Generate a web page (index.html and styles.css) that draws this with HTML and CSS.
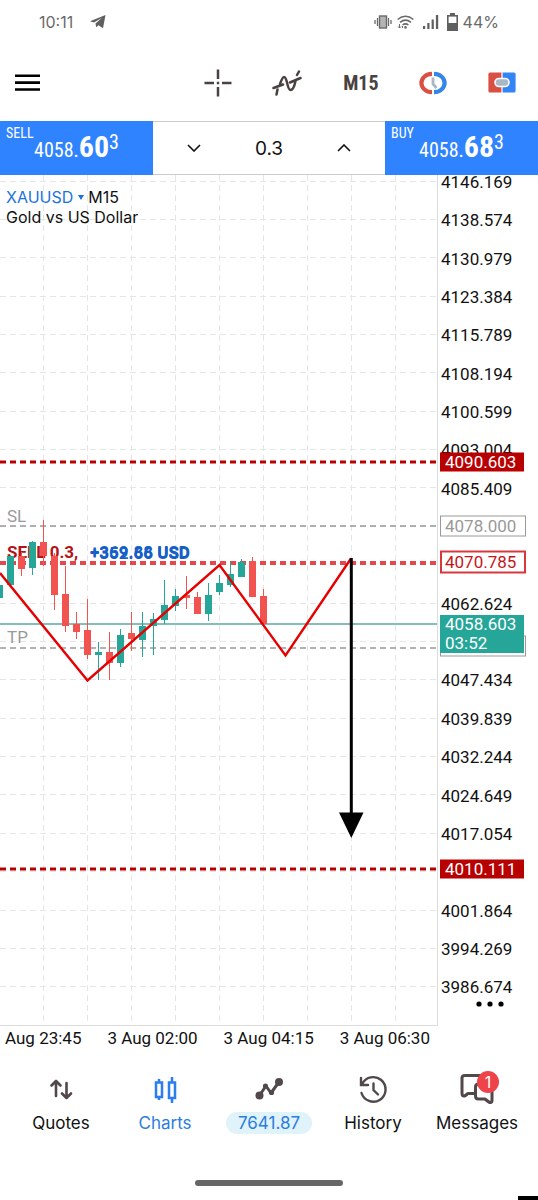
FILE: index.html
```
<!DOCTYPE html>
<html lang="en">
<head>
  <meta charset="UTF-8" />
  <meta name="viewport" content="width=device-width, initial-scale=1" />
  <title>XAUUSD M15</title>
  <link rel="stylesheet" href="styles.css">
</head>
<body>

  <!-- Status bar -->
  <header class="status">
    <span class="clock">10:11</span>
    <svg class="telegram" width="16" height="14" viewBox="0 0 16 14"><path d="M0 6.300 15.500 0 13 13.300 8.500 10.200 6.200 12.200 5.500 8.500 12 2.800 4 7.500Z" fill="#5f5f5f"/></svg>
    <span class="spacer"></span>
    <svg width="18" height="14" viewBox="0 0 18 14" fill="none" stroke="#6a6a6a">
      <rect x="5.500" y="1" width="7" height="12" fill="#b5b5b5" stroke-width="1.400"/>
      <path d="M3.500 3v8M1 5v4M14.500 3v8M17 5v4" stroke-width="1.300"/>
    </svg>
    <svg width="17" height="14" viewBox="0 0 17 14" fill="none" stroke="#6a6a6a" stroke-width="1.600">
      <path d="M.6 4.500Q8.500-2 16.400 4.500M3 7.300q5.500-4.300 11 0M5.600 10q3-2.400 5.800 0"/>
      <circle cx="8.500" cy="12.400" r="1.300" fill="#6a6a6a" stroke="none"/>
      <path d="M2.500 9v4M1 11.500 2.500 13 4 11.500M5.500 13v-2" stroke-width="1"/>
    </svg>
    <svg class="signal" width="16" height="14" viewBox="0 0 16 14" fill="#5f5f5f">
      <rect x="0" y="11" width="2.200" height="3"/><rect x="4.300" y="8" width="2.200" height="6"/>
      <rect x="8.600" y="4.500" width="2.200" height="9.500"/><rect x="12.900" y="0" width="2.300" height="14"/>
    </svg>
    <svg class="battery" width="11" height="18" viewBox="0 0 11 18">
      <path d="M3 0h5v2h3v16H0V2h3Z" fill="#5f5f5f"/><rect x="1.600" y="3.600" width="7.800" height="6.400" fill="#fff"/>
    </svg>
    <span>44%</span>
  </header>

  <!-- Toolbar -->
  <nav class="toolbar">
    <button class="tool menu" aria-label="Menu">
      <svg width="25" height="18" viewBox="0 0 25 18" stroke="#000" stroke-width="2.600"><path d="M0 1.800h25M0 8.600h25M0 15.500h25"/></svg>
    </button>
    <button class="tool" aria-label="Crosshair">
      <svg width="28" height="28" viewBox="0 0 28 28" stroke="#4a4240" stroke-width="2.500"><path d="M14 .5v9.500M14 18v9.500M.5 14h9.500M18 14h9.500M12.800 14h2.400"/></svg>
    </button>
    <button class="tool" aria-label="Indicators">
      <svg width="30" height="26" viewBox="0 0 30 26" fill="none" stroke="#4a4240" stroke-width="2.500" stroke-linecap="round">
        <path d="M1.500 18 11 14.500M18 12.500 28.500 8M4.500 24.500 5.500 19.500M8 14Q10.500 7 12 7C15.500 7 15 20 18.500 20 21 20 22.500 16 23.500 11M25 5 27 1.500"/>
      </svg>
    </button>
    <button class="tool period">M15</button>
    <button class="tool" aria-label="Trade clock">
      <svg width="28" height="24" viewBox="0 0 28 24" fill="none">
        <path d="M13 2.800A10.600 9.200 0 0 0 13 21.200" stroke="#da4f43" stroke-width="4.200"/>
        <path d="M15 2.800A10.600 9.200 0 0 1 15 21.200" stroke="#3385e8" stroke-width="4.200"/>
        <path d="M14 6.500v6.500l3.500 4" stroke="#a9b8c4" stroke-width="2.800"/>
      </svg>
    </button>
    <button class="tool" aria-label="One click trading">
      <svg width="28" height="21" viewBox="0 0 28 21">
        <path d="M2 .5h11.400v20H2Q.4 20.500.4 19V2Q.4.500 2 .5" fill="#da4f43"/>
        <path d="M14.600.5H26q1.600 0 1.600 1.500v17q0 1.500-1.600 1.500H14.600Z" fill="#3385f5"/>
        <rect x="7" y="6.500" width="14" height="8" rx="4" fill="#a9b8c4" stroke="#fff" stroke-width="1.600"/>
      </svg>
    </button>
  </nav>

  <!-- Trade panel -->
  <section class="trade">
    <button class="price">
      <span class="side">SELL</span>
      <span class="quote">4058.<b>60</b><sup>3</sup></span>
    </button>
    <div class="volume">
      <button class="step" aria-label="Less"><svg width="14" height="8" viewBox="0 0 14 8"><path d="M1 1l6 6 6-6"/></svg></button>
      <input class="lots" type="text" value="0.3" aria-label="Volume">
      <button class="step" aria-label="More"><svg width="14" height="8" viewBox="0 0 14 8"><path d="M1 7l6-6 6 6"/></svg></button>
    </div>
    <button class="price">
      <span class="side">BUY</span>
      <span class="quote">4058.<b>68</b><sup>3</sup></span>
    </button>
  </section>

  <!-- Chart -->
  <main class="chart">
    <div class="plot">
      <div class="symbol">
        <div><a href="#">XAUUSD <i></i></a> M15</div>
        <div>Gold vs US Dollar</div>
      </div>
      <svg class="candles" id="candles" viewBox="0 0 437 850"></svg>
    </div>
    <div class="axis">
      <ul class="scale" id="scale"></ul>
      <span class="tag solid" style="top: 33.7%">4090.603</span>
      <span class="tag outline" style="top: 41.2%">4078.000</span>
      <span class="tag outline entry" style="top: 45.5%">4070.785</span>
      <span class="tag outline" style="top: 55.4%">4054.003</span>
      <span class="tag bid" style="top: 53.9%">4058.603<br>03:52</span>
      <span class="tag solid" style="top: 81.5%">4010.111</span>
      <button class="more" aria-label="More"><svg width="28" height="6" viewBox="0 0 28 6"><circle cx="3" cy="3" r="2.600"/><circle cx="14" cy="3" r="2.600"/><circle cx="25" cy="3" r="2.600"/></svg></button>
    </div>
  </main>
  <div class="times">
    <span>Aug 23:45</span><span>3 Aug 02:00</span><span>3 Aug 04:15</span><span>3 Aug 06:30</span>
  </div>

  <!-- Bottom tabs -->
  <nav class="tabs">
    <a class="tab" href="#">
      <svg width="24" height="32" viewBox="0 0 24 32" fill="none" stroke="#51484a" stroke-width="2.600" stroke-linecap="round" stroke-linejoin="round"><path d="M7 23V8M2.500 12.500 7 8l4.500 4.500M17.500 10v15M13 20.500l4.500 4.500 4.500-4.500"/></svg>
      <span>Quotes</span>
    </a>
    <a class="tab active" href="#">
      <svg width="24" height="32" viewBox="0 0 24 32" fill="none" stroke="#2b7df0" stroke-width="2.500"><path d="M6 6v3M6 24v3M19 4v5M19 25v5M3 9.500h6v14.500H3ZM16 9.500h6v15.500h-6Z"/></svg>
      <span>Charts</span>
    </a>
    <a class="tab" href="#">
      <svg width="28" height="32" viewBox="0 0 28 32" fill="none" stroke="#51484a" stroke-width="3" stroke-linejoin="round"><path d="M4 23 11 13 16 20 24 9"/><g fill="#51484a" stroke="none"><circle cx="4.500" cy="22.500" r="4"/><circle cx="10.500" cy="13" r="2.600"/><circle cx="16.500" cy="19.500" r="2.600"/><circle cx="24" cy="9" r="4"/></g></svg>
      <span class="pill">7641.87</span>
    </a>
    <a class="tab" href="#">
      <svg width="30" height="32" viewBox="0 0 30 32" fill="none" stroke="#51484a" stroke-width="2.400" stroke-linecap="round"><path d="M4 11.500A12.300 12.300 0 1 1 3.500 20M3 5v7h7M15.500 10.500V17l4.500 4.500"/></svg>
      <span>History</span>
    </a>
    <a class="tab" href="#">
      <svg width="34" height="32" viewBox="0 0 34 32" fill="none" stroke="#51484a" stroke-width="3" stroke-linecap="round" stroke-linejoin="round"><path d="M14 20.500H8Q5 23 4 23 2 23 2 20V5Q2 2.500 5 2.500H20M20 11H18.500Q15.500 11 15.500 14V23Q15.500 26 18.500 26H25Q29 29.500 30.500 29.500 32 29.500 32 27V14"/></svg>
      <span>Messages</span>
      <b class="badge">1</b>
    </a>
  </nav>
  <div class="home"></div>
  <div class="corner"></div>

  <script src="script.js"></script>

</body>
</html>
```
FILE: styles.css
```
* {
  box-sizing: border-box;
}

body {
  margin: 0;
  min-height: 100vh;
  display: flex;
  flex-direction: column;
  background: #fff;
  color: #111;
  font-family: Inter, "Liberation Sans", sans-serif;
  font-size: 16px;
}

button {
  border: 0;
  padding: 0;
  background: none;
  color: inherit;
  font: inherit;
}

a {
  color: inherit;
  text-decoration: none;
}

svg {
  display: block;
}

/* Status bar */
.status {
  display: flex;
  align-items: center;
  height: 44px;
  padding: 0 39px;
  color: #6a6a6a;
}

.spacer {
  flex: 1;
}

.telegram {
  margin-left: 17px;
}

.status svg + svg {
  margin-left: 5px;
}

.status .signal {
  margin-left: 9px;
}

.status .battery {
  margin: 0 5px 0 8px;
}

/* Toolbar */
.toolbar {
  display: flex;
  align-items: center;
  justify-content: space-between;
  height: 77px;
  padding: 0 22px 0 15px;
}

.menu {
  margin-right: 123px;
}

.period {
  color: #4a4240;
  font-family: "Roboto Condensed", Roboto, sans-serif;
  font-size: 20px;
  font-weight: 700;
}

/* Trade panel */
.trade {
  display: flex;
  height: 54px;
}

.price {
  position: relative;
  flex: 153;
  background: #3083ff;
  color: #fff;
  font-family: "Roboto Condensed", Roboto, sans-serif;
}

.side {
  position: absolute;
  top: 4px;
  left: 6px;
  font-size: 14px;
}

.quote {
  font-size: 20px;
  line-height: 28px;
}

.quote b {
  font-size: 30px;
}

.quote sup {
  font-size: 20px;
  line-height: 0;
}

.volume {
  flex: 232;
  display: flex;
  align-items: center;
  border-top: 1px solid #ccc;
  border-bottom: 1px solid #ccc;
}

.step {
  flex: 1;
  display: flex;
  justify-content: center;
}

.step path {
  fill: none;
  stroke: #111;
  stroke-width: 1.6;
}

.lots {
  width: 68px;
  border: 0;
  padding: 0;
  background: none;
  color: #111;
  font-family: Inter, sans-serif;
  font-size: 19px;
  text-align: center;
}

/* Chart */
.chart {
  display: flex;
}

.plot {
  position: relative;
  flex: 1;
  border-right: 1px solid #ddd;
  border-bottom: 1px solid #ddd;
}

.symbol {
  position: absolute;
  top: 12px;
  left: 6px;
  line-height: 20px;
}

.symbol a {
  color: #1c72e0;
}

.symbol i {
  display: inline-block;
  border: 3px solid transparent;
  border-top: 5px solid #1c72e0;
  border-bottom: 0;
  vertical-align: 3px;
}

.candles {
  width: 100%;
}

.grid {
  fill: none;
  stroke: #e6e6e6;
  stroke-dasharray: 6 4;
}

.level {
  stroke: #b90000;
  stroke-width: 3;
  stroke-dasharray: 6 4;
}

.stop {
  stroke: #999;
  stroke-width: 1.5;
  stroke-dasharray: 6 4;
}

.open {
  stroke: #e3484c;
  stroke-width: 4;
  stroke-dasharray: 6 4;
}

.bid-line {
  stroke: #5ba8a3;
  stroke-width: 1.5;
}

.up {
  fill: #26a699;
  stroke: #26a699;
}

.down {
  fill: #f05350;
  stroke: #f05350;
}

.trend {
  fill: none;
  stroke: #e60000;
  stroke-width: 2.4;
}

.note {
  fill: #999;
  font-family: Roboto, sans-serif;
  font-size: 17px;
}

.deal {
  font-family: Roboto, sans-serif;
  font-size: 17px;
  font-weight: 700;
}

.sell {
  fill: #b31217;
}

.profit {
  fill: #1560c8;
}

.axis {
  position: relative;
  width: 100px;
  overflow: hidden;
  color: #111;
  font-family: Roboto, sans-serif;
  font-size: 17px;
}

.scale {
  display: flex;
  flex-direction: column;
  justify-content: space-between;
  height: 97%;
  margin: -3px 0 0;
  padding: 0 0 0 3px;
  line-height: 20px;
  list-style: none;
}

.scale li {
  height: 20px;
}

.tag {
  position: absolute;
  left: 2px;
  width: 84px;
  padding: 0 5px;
  line-height: 19px;
  transform: translateY(-50%);
}

.solid {
  background: #b90000;
  color: #fff;
}

.outline {
  width: 86px;
  border: 1px solid #999;
  padding: 0 4px;
  background: #fff;
  color: #999;
}

.entry {
  border: 2px solid #d8383c;
  padding: 0 3px;
  color: #c4161a;
}

.bid {
  background: #26a699;
  color: #fff;
}

.more {
  position: absolute;
  left: 38px;
  bottom: 19px;
}

.times {
  display: flex;
  justify-content: space-between;
  padding: 0 108px 0 5px;
  font-family: Roboto, sans-serif;
  font-size: 17px;
  line-height: 24px;
}

/* Bottom tabs */
.tabs {
  display: flex;
  justify-content: space-between;
  padding: 23px 9px 0;
  font-size: 17px;
}

.tab {
  position: relative;
  flex: 1;
  display: flex;
  flex-direction: column;
  align-items: center;
  gap: 7px;
  line-height: 22px;
}

.active {
  color: #2b7de0;
}

.pill {
  padding: 0 12px;
  border-radius: 11px;
  background: #e0f3fb;
  color: #2b7de0;
}

.badge {
  position: absolute;
  top: -2px;
  left: 52px;
  width: 22px;
  border-radius: 11px;
  background: #ee4349;
  color: #fff;
  font-size: 16px;
  font-weight: 400;
  text-align: center;
}

.home {
  width: 148px;
  height: 6px;
  margin: auto auto 10px;
  border-radius: 3px;
  background: #666;
}

.corner {
  align-self: flex-end;
  width: 20px;
  height: 4px;
  background: #000;
}
```
FILE: script.js
```
// price labels, top to bottom; the rows under a price tag stay empty
var covered = [9, 10, 12, 18];
var scale = document.getElementById('scale');
for (var i = 0; i < 22; i++) {
  var li = document.createElement('li');
  if (covered.indexOf(i) < 0) li.textContent = (4146.169 - i * 7.595).toFixed(3);
  scale.appendChild(li);
}

// up?, high, open/close top, open/close bottom, low
var bars = [
  [1, 409, 410, 423, 423], [1, 381, 381, 410, 410], [0, 377, 381, 394, 401],
  [1, 366, 367, 393, 400], [0, 345, 367, 381, 391], [0, 378, 381, 420, 435],
  [0, 391, 419, 451, 457], [0, 437, 449, 457, 464], [0, 424, 455, 480, 484],
  [1, 467, 477, 480, 505], [0, 457, 477, 488, 505], [1, 454, 460, 488, 492],
  [0, 437, 458, 464, 476], [1, 437, 451, 465, 482], [1, 438, 444, 451, 480],
  [1, 405, 430, 445, 449], [1, 414, 421, 431, 436], [0, 401, 420, 423, 434],
  [0, 417, 422, 439, 439], [1, 408, 420, 439, 446], [1, 400, 408, 417, 420],
  [1, 387, 399, 410, 412], [1, 384, 387, 402, 402], [0, 382, 386, 422, 422],
  [0, 414, 421, 449, 449]
];

var grid = '';
for (var x = 43.5; x < 438; x += 44) grid += 'M' + x + ' 0V850';
for (var k = 0; k < 22; k++) grid += 'M0 ' + Math.floor(6 + k * 38.37) + '.5H438';

var out = '<path class="grid" d="' + grid + '"/>' +
  '<path class="level" d="M0 287H438M0 694H438"/>' +
  '<path class="stop" d="M0 351H438M0 473H438"/>' +
  '<path class="bid-line" d="M0 449H438"/>' +
  '<path class="open" d="M0 388H438"/>' +
  '<text class="note" x="7" y="347">SL</text>' +
  '<text class="note" x="7" y="468">TP</text>' +
  '<g class="deal"><text class="sell" x="7" y="383">SELL 0.3,</text>' +
  '<text class="profit" x="90" y="383">+369.88 USD</text>' +
  '<text class="profit" x="90" y="384">+352.66 USD</text></g>';

bars.forEach(function (b, n) {
  var cx = n * 11 - 0.5;
  out += '<g class="' + (b[0] ? 'up' : 'down') + '">' +
    '<path d="M' + cx + ' ' + b[1] + 'V' + b[4] + '"/>' +
    '<rect x="' + (cx - 3) + '" y="' + (b[2] + 0.5) + '" width="6" height="' + (b[3] - b[2] - 1) + '"/></g>';
});

out += '<path class="trend" d="M0 398 87.500 505.500 219.500 390 285.500 480.500 351 383.500"/>' +
  '<path d="M351.300 383V640" stroke="#000" stroke-width="3"/>' +
  '<path d="M339 637.500H363.500L351.300 663Z"/>';

document.getElementById('candles').innerHTML = out;
```
